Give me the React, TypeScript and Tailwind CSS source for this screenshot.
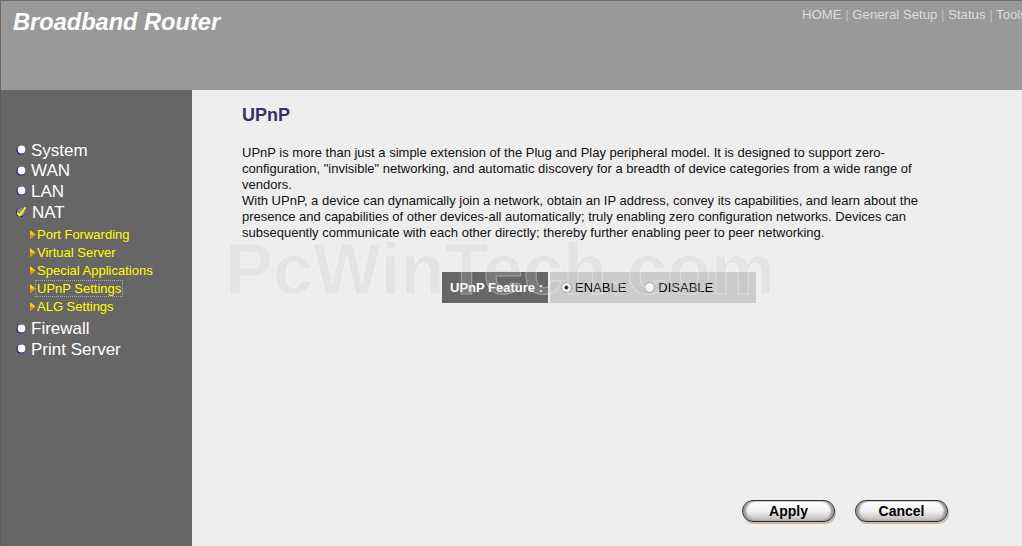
import React from "react";

function Ball() {
  return (
    <svg width="10" height="10" viewBox="0 0 10 10" className="shrink-0">
      <circle cx="5" cy="5" r="4.6" fill="#1c1c8c" />
      <circle cx="5.5" cy="4.5" r="3.9" fill="#ffffff" />
    </svg>
  );
}

function CheckBall() {
  return (
    <svg width="12" height="12" viewBox="0 0 12 12" className="shrink-0 -ml-[1px]">
      <circle cx="5.5" cy="6.5" r="4.6" fill="#1c1c8c" />
      <circle cx="6" cy="6" r="3.9" fill="#8a8a8a" />
      <path d="M2.2 6.8 L4.6 9.6 L10.6 1.2" stroke="#ffff00" strokeWidth="1.8" fill="none" />
    </svg>
  );
}

function Arrow() {
  return (
    <svg width="6" height="9" viewBox="0 0 6 9" className="shrink-0">
      <polygon points="0,0 5.5,4.5 0,9" fill="#ffd200" />
      <polygon points="0,4.5 5.5,4.5 0,9" fill="#e09a00" />
    </svg>
  );
}

function Radio({ checked }: { checked: boolean }) {
  return (
    <svg width="11" height="11" viewBox="0 0 11 11" className="shrink-0">
      <circle cx="5.5" cy="5.5" r="5" fill="#f6f6f6" stroke="#a0a0a0" strokeWidth="1" />
      <circle cx="5.5" cy="5.5" r="3.6" fill="#ffffff" />
      {checked && <circle cx="5.5" cy="5.5" r="2" fill="#222222" />}
    </svg>
  );
}

function MainItem({ label, checked }: { label: string; checked?: boolean }) {
  return (
    <div className="h-[20.6px] flex items-center gap-[5px] text-[17px] leading-none text-white">
      {checked ? <CheckBall /> : <Ball />}
      <span>{label}</span>
    </div>
  );
}

function SubItem({ label, focus }: { label: string; focus?: boolean }) {
  return (
    <div className="h-[18px] flex items-center gap-[1px] pl-[14px] text-[13px] leading-none text-[#ffff00]">
      <Arrow />
      <span className={focus ? "border border-dotted border-[#a8a8a8] px-[1px] py-[1px] -ml-[2px]" : ""}>{label}</span>
    </div>
  );
}

function PillButton({ label }: { label: string }) {
  return (
    <button className="w-[93px] h-[22px] rounded-full border-[1.5px] border-[#2a2a2a] bg-gradient-to-b from-[#ffffff] via-[#f2f2f2] to-[#b8b8b8] shadow-[1px_2px_0_#cbb9a3,inset_3px_0_2px_#9a9a9a,inset_-3px_0_2px_#9a9a9a] text-[14px] font-bold text-black leading-none">
      {label}
    </button>
  );
}

export default function App() {
  return (
    <div className="w-[1022px] h-[546px] overflow-hidden bg-[#eeeeee] flex flex-col font-['Liberation_Sans',Arial,sans-serif]">
      <div className="h-[90px] shrink-0 bg-[#999999] border-t border-l border-[#6a6a6a] flex overflow-hidden">
        <div className="w-[801px] shrink-0 pl-[12px] pt-[10px] text-[23.6px] font-bold italic text-white leading-none">
          Broadband Router
        </div>
        <div className="pt-[7px] text-[13.2px] leading-none text-[#dcdcdc] whitespace-nowrap">
          HOME <span className="text-[#c9bf9f]">|</span> General Setup <span className="text-[#c9bf9f]">|</span> Status{" "}
          <span className="text-[#c9bf9f]">|</span> Tools
        </div>
      </div>
      <div className="flex flex-1">
        <div className="w-[192px] shrink-0 bg-[#666666] border-l border-[#5c5c5c] pt-[50px] pl-[15px]">
          <MainItem label="System" />
          <MainItem label="WAN" />
          <MainItem label="LAN" />
          <MainItem label="NAT" checked />
          <div className="py-[3px]">
            <SubItem label="Port Forwarding" />
            <SubItem label="Virtual Server" />
            <SubItem label="Special Applications" />
            <SubItem label="UPnP Settings" focus />
            <SubItem label="ALG Settings" />
          </div>
          <MainItem label="Firewall" />
          <MainItem label="Print Server" />
        </div>
        <div className="flex-1 relative pl-[50px] pt-[15px]">
          <h1 className="text-[18px] font-bold text-[#33336a] leading-[21px]">UPnP</h1>
          <p className="mt-[19px] w-[700px] text-[13px] leading-[16px] text-[#111111]">
            UPnP is more than just a simple extension of the Plug and Play peripheral model. It is designed to support
            zero-configuration, "invisible" networking, and automatic discovery for a breadth of device categories from a
            wide range of vendors.
            <br />
            With UPnP, a device can dynamically join a network, obtain an IP address, convey its capabilities, and learn
            about the presence and capabilities of other devices-all automatically; truly enabling zero configuration
            networks. Devices can subsequently communicate with each other directly; thereby further enabling peer to peer
            networking.
          </p>
          <div className="mt-[31px] ml-[200px] flex gap-[2px] h-[31px]">
            <div className="w-[106px] bg-[#666666] flex items-center justify-end pr-[5px] text-[13px] font-bold text-white">
              UPnP Feature :
            </div>
            <div className="w-[206px] bg-[#cccccc] flex items-center pl-[11px] text-[13px] text-black">
              <Radio checked />
              <span className="ml-[3px]">ENABLE</span>
              <span className="ml-[18px]">
                <Radio checked={false} />
              </span>
              <span className="ml-[3px]">DISABLE</span>
            </div>
          </div>
          <div className="mt-[197px] flex justify-end gap-[20px] pr-[74px]">
            <PillButton label="Apply" />
            <PillButton label="Cancel" />
          </div>
          <div className="absolute left-[33px] top-[143px] pointer-events-none text-[72px] font-bold leading-none text-[rgba(196,196,196,0.22)] [-webkit-text-stroke:1px_rgba(255,255,255,0.35)] whitespace-nowrap">
            PcWinTech.com
          </div>
        </div>
      </div>
    </div>
  );
}
